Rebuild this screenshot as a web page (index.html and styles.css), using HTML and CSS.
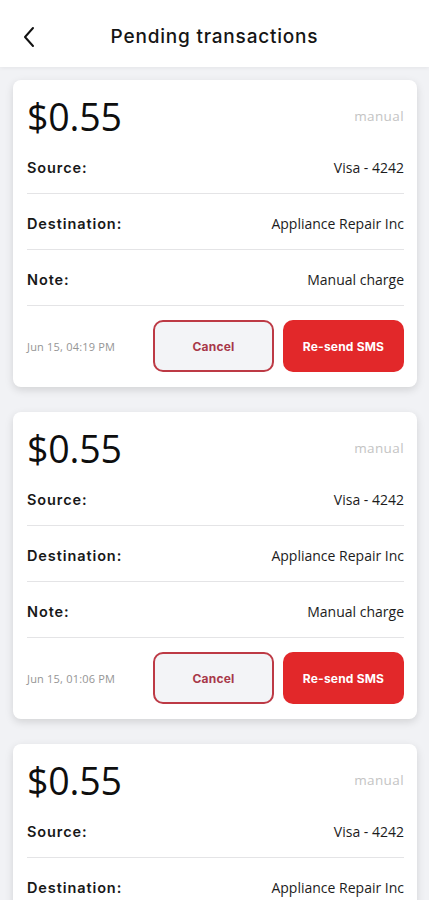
FILE: index.html
```html
<!DOCTYPE html>
<html lang="en">
<head>
<meta charset="utf-8">
<title>Pending transactions</title>
<link rel="stylesheet" href="styles.css">
</head>
<body>
<header class="topbar">
  <button class="back" aria-label="Back">
    <svg width="12" height="22" viewBox="0 0 12 22"><path d="M10 2 L2 11 L10 20" fill="none" stroke="#111" stroke-width="2" stroke-linecap="round" stroke-linejoin="round"/></svg>
  </button>
  <h1 class="title">Pending transactions</h1>
</header>
<main class="list">
  <section class="card">
    <div class="card-head"><span class="amount">$0.55</span><span class="type">manual</span></div>
    <div class="row"><span class="label">Source:</span><span class="value">Visa - 4242</span></div>
    <div class="row"><span class="label">Destination:</span><span class="value">Appliance Repair Inc</span></div>
    <div class="row"><span class="label">Note:</span><span class="value">Manual charge</span></div>
    <div class="actions">
      <span class="date">Jun 15, 04:19 PM</span>
      <button class="btn btn-cancel">Cancel</button>
      <button class="btn btn-resend">Re-send SMS</button>
    </div>
  </section>
  <section class="card">
    <div class="card-head"><span class="amount">$0.55</span><span class="type">manual</span></div>
    <div class="row"><span class="label">Source:</span><span class="value">Visa - 4242</span></div>
    <div class="row"><span class="label">Destination:</span><span class="value">Appliance Repair Inc</span></div>
    <div class="row"><span class="label">Note:</span><span class="value">Manual charge</span></div>
    <div class="actions">
      <span class="date">Jun 15, 01:06 PM</span>
      <button class="btn btn-cancel">Cancel</button>
      <button class="btn btn-resend">Re-send SMS</button>
    </div>
  </section>
  <section class="card">
    <div class="card-head"><span class="amount">$0.55</span><span class="type">manual</span></div>
    <div class="row"><span class="label">Source:</span><span class="value">Visa - 4242</span></div>
    <div class="row"><span class="label">Destination:</span><span class="value">Appliance Repair Inc</span></div>
    <div class="row"><span class="label">Note:</span><span class="value">Manual charge</span></div>
  </section>
</main>
</body>
</html>
```
FILE: styles.css
```css
* { box-sizing: border-box; }
html, body { margin: 0; padding: 0; }
body {
  background: #f1f2f5;
  font-family: "Open Sans", "Noto Sans", sans-serif;
  color: #111;
  height: 900px;
  overflow: hidden;
}
.topbar {
  position: relative;
  height: 67px;
  background: #fff;
  display: flex;
  align-items: center;
  justify-content: center;
  box-shadow: 0 1px 4px rgba(0,0,0,0.06);
}
.back {
  position: absolute;
  left: 23px;
  top: 26px;
  border: 0;
  background: none;
  padding: 0;
  display: flex;
}
.title {
  margin: 0;
  font-family: Inter, sans-serif;
  font-weight: 500;
  font-size: 19px;
  letter-spacing: 0.8px;
  color: #151515;
  padding-top: 5px;
}
.list {
  padding: 13px 12px 0 13px;
  display: flex;
  flex-direction: column;
  gap: 25px;
}
.card {
  background: #fff;
  border-radius: 8px;
  box-shadow: 0 3px 8px rgba(0,0,0,0.13);
  padding: 0 13px 15px 14px;
}
.card-head {
  height: 58px;
  display: flex;
  justify-content: space-between;
  align-items: center;
  padding-top: 14px;
}
.amount {
  font-size: 37.5px;
  font-weight: 500;
  letter-spacing: -0.2px;
  color: #0e0e0e;
}
.type {
  font-size: 13.5px;
  color: #c4c4c4;
  letter-spacing: 0.4px;
}
.row {
  height: 56px;
  display: flex;
  justify-content: space-between;
  align-items: center;
  padding-top: 3px;
  border-bottom: 1px solid #e4e4e6;
}
.label {
  font-family: Inter, sans-serif;
  font-weight: 600;
  font-size: 14.5px;
  letter-spacing: 0.9px;
  color: #181818;
}
.value {
  font-size: 14px;
  color: #1c1c1c;
}
.actions {
  display: flex;
  align-items: center;
  padding-top: 14px;
  gap: 9px;
}
.date {
  font-size: 11px;
  letter-spacing: 0.2px;
  color: #959595;
  flex: 1;
}
.btn {
  width: 121px;
  height: 52px;
  border-radius: 10px;
  font-family: Inter, sans-serif;
  font-weight: 700;
  font-size: 12px;
  letter-spacing: 0.2px;
}
.btn-cancel {
  background: #f3f4f7;
  border: 2px solid #bd3a45;
  color: #a83849;
}
.btn-resend {
  background: #e2282a;
  border: 0;
  color: #fff;
}
```
